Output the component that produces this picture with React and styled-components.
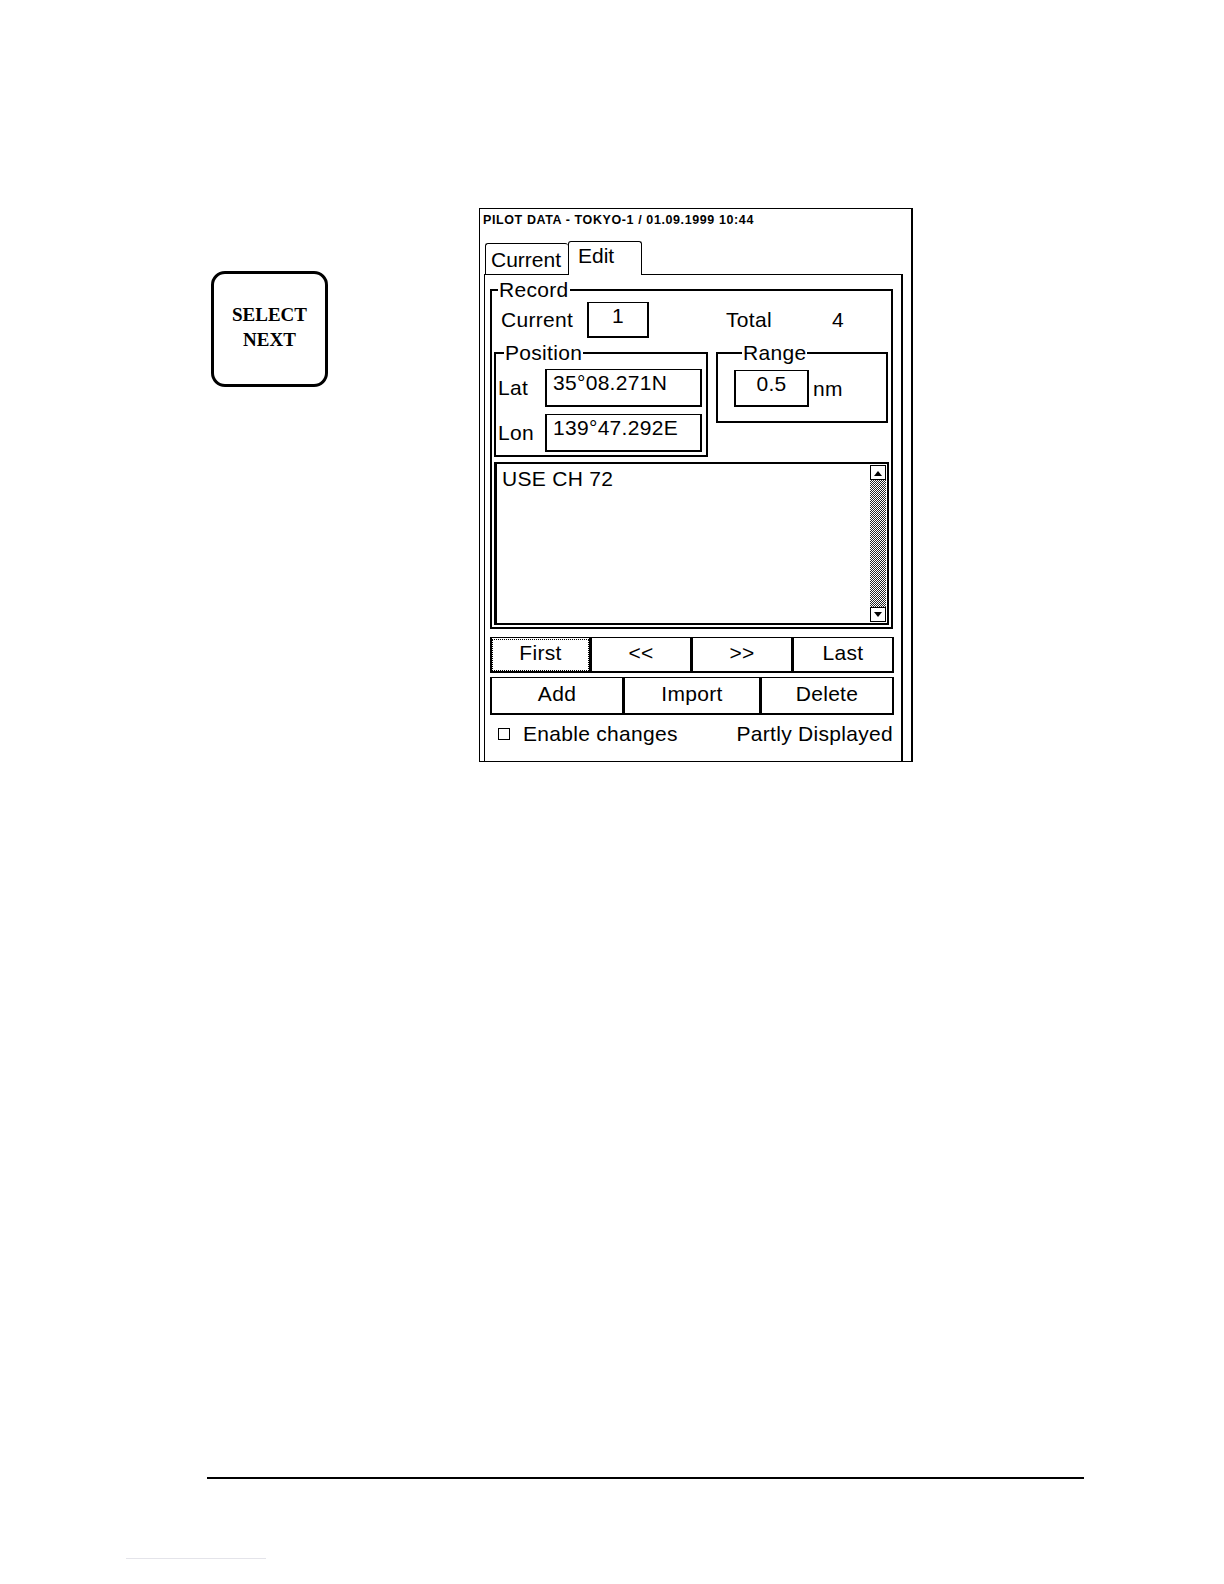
import React from 'react';
import styled, { createGlobalStyle } from 'styled-components';

const GlobalStyle = createGlobalStyle`
  html, body {
    margin: 0;
    padding: 0;
    background: #fff;
  }
  body {
    font-family: "Liberation Sans", Arial, sans-serif;
    color: #000;
  }
`;

const Page = styled.div`
  width: 1224px;
  min-height: 1584px;
  padding-top: 208px;
  box-sizing: border-box;
  display: flex;
  flex-direction: column;
`;

const Figure = styled.div`
  display: flex;
  align-items: flex-start;
  padding-left: 211px;
`;

const HardKey = styled.div`
  margin-top: 63px;
  width: 117px;
  height: 116px;
  box-sizing: border-box;
  border: 3px solid #000;
  border-radius: 14px;
  display: flex;
  flex-direction: column;
  align-items: center;
  justify-content: center;
  font-family: "Liberation Serif", "Times New Roman", serif;
  font-weight: bold;
  font-size: 19px;
  line-height: 25px;
  padding-bottom: 4px;
`;

const Dialog = styled.div`
  margin-left: 151px;
  width: 434px;
  height: 554px;
  box-sizing: border-box;
  border: 1px solid #000;
  border-right-width: 2px;
  display: flex;
  flex-direction: column;
`;

const Title = styled.div`
  font-weight: bold;
  font-size: 12.5px;
  line-height: 14px;
  letter-spacing: 0.6px;
  padding: 4px 0 0 3px;
  white-space: nowrap;
`;

const TabStrip = styled.div`
  display: flex;
  align-items: flex-end;
  margin: 14px 0 0 5px;
  height: 33px;
  position: relative;
  z-index: 1;
`;

const Tab = styled.div`
  box-sizing: border-box;
  font-size: 21px;
  line-height: 24px;
  background: #fff;
  border: 1px solid #000;
  border-bottom: none;
  border-radius: 3px 3px 0 0;
  height: ${(p) => (p.$active ? '34px' : '31px')};
  margin-bottom: ${(p) => (p.$active ? '-1px' : '0')};
  width: ${(p) => p.$width}px;
  padding: ${(p) => (p.$active ? '2px 0 0 9px' : '4px 0 0 5px')};
  border-right-width: ${(p) => (p.$active ? '1px' : '0')};
`;

const Panel = styled.div`
  flex: 1;
  margin: 0 8px 0 4px;
  border: 1px solid #000;
  border-right-width: 2px;
  border-bottom: none;
  padding: 3px 8px 0 5px;
  display: flex;
  flex-direction: column;
  font-size: 21px;
  letter-spacing: 0.3px;
`;

const GroupBox = styled.fieldset`
  margin: 0;
  padding: ${(p) => p.$pad || '0'};
  border: 2px solid #000;
  min-width: 0;
  box-sizing: border-box;
  width: ${(p) => (p.$width ? `${p.$width}px` : 'auto')};
  height: ${(p) => (p.$height ? `${p.$height}px` : 'auto')};
`;

const Legend = styled.legend`
  padding: 0 1px;
  margin-left: ${(p) => p.$indent || 6}px;
  font-size: 21px;
  line-height: 23px;
`;

const RecordRow = styled.div`
  display: flex;
  align-items: center;
  padding-left: 9px;
  height: 36px;
  margin-top: 1px;
`;

const Label = styled.span`
  display: inline-block;
  width: ${(p) => p.$width}px;
  line-height: 24px;
  white-space: nowrap;
`;

const Field = styled.div`
  box-sizing: border-box;
  width: ${(p) => p.$width}px;
  height: ${(p) => p.$height}px;
  border: 2px solid #000;
  border-top-width: 1.5px;
  padding: 1px 0 0 ${(p) => (p.$center ? 0 : 6)}px;
  text-align: ${(p) => (p.$center ? 'center' : 'left')};
  line-height: 24px;
  white-space: nowrap;
`;

const GroupsRow = styled.div`
  display: flex;
  gap: 8px;
  margin: 3px 3px 0 2px;
  align-items: flex-start;
`;

const FieldLine = styled.div`
  display: flex;
  align-items: center;
  margin-top: ${(p) => p.$gap}px;
`;

const Notes = styled.div`
  display: flex;
  margin: 5px 2px 1px;
  height: 163px;
  box-sizing: border-box;
  border: 2px solid #000;
  border-left-width: 3px;
`;

const NotesText = styled.div`
  flex: 1;
  padding: 2px 0 0 5px;
  line-height: 26px;
`;

const ScrollBar = styled.div`
  width: 16px;
  margin: 1px 1px 1px 0;
  display: flex;
  flex-direction: column;
`;

const ScrollArrow = styled.div`
  width: 16px;
  height: 15px;
  box-sizing: border-box;
  border: 1px solid #000;
  background: #fff;
  display: flex;
  align-items: center;
  justify-content: center;
`;

const ScrollTrack = styled.div`
  flex: 1;
  background: repeating-conic-gradient(#000 0 25%, #fff 0 50%) 0 0 / 2px 2px;
  opacity: 0.85;
`;

const ButtonRow = styled.div`
  display: grid;
  grid-template-columns: ${(p) => p.$cols};
  margin-top: ${(p) => p.$top}px;
  height: ${(p) => p.$height}px;
  margin-right: -1px;
`;

const Button = styled.div`
  box-sizing: border-box;
  border: 2px solid #000;
  border-top-width: 1px;
  border-bottom-width: 2.5px;
  border-left-width: ${(p) => (p.$first ? '2px' : '1px')};
  display: flex;
  align-items: center;
  justify-content: center;
  line-height: 24px;
  padding-bottom: 3px;
  outline: ${(p) => (p.$focus ? '1px dotted #000' : 'none')};
  outline-offset: -3px;
`;

const StatusRow = styled.div`
  display: flex;
  align-items: center;
  justify-content: space-between;
  margin: 6px 0 0 8px;
  height: 26px;
`;

const CheckLabel = styled.div`
  display: flex;
  align-items: center;
  gap: 13px;
`;

const CheckBox = styled.span`
  display: inline-block;
  width: 12px;
  height: 12px;
  box-sizing: border-box;
  border: 1.5px solid #000;
`;

const FooterRule = styled.div`
  margin: 715px 0 0 207px;
  width: 877px;
  height: 2px;
  background: #000;
`;

const FaintRule = styled.div`
  margin: 79px 0 0 126px;
  width: 140px;
  height: 1px;
  background: #e4e4ea;
`;

const Arrow = ({ up }) => (
  <svg width="10" height="6" viewBox="0 0 10 6">
    <path d={up ? 'M1 6 L5 1 L9 6 Z' : 'M1 0 L5 5 L9 0 Z'} fill="#000" />
  </svg>
);

const App = () => {
  return (
    <>
      <GlobalStyle />
      <Page>
        <Figure>
          <HardKey>
            <span>SELECT</span>
            <span>NEXT</span>
          </HardKey>

          <Dialog>
            <Title>PILOT DATA - TOKYO-1 / 01.09.1999 10:44</Title>
            <TabStrip>
              <Tab $width={83}>Current</Tab>
              <Tab $width={74} $active>Edit</Tab>
            </TabStrip>

            <Panel>
              <GroupBox $pad="0 0 1px 0">
                <Legend $indent={6}>Record</Legend>
                <RecordRow>
                  <Label $width={86}>Current</Label>
                  <Field $width={62} $height={36} $center>1</Field>
                  <Label $width={77} style={{ marginLeft: 77 }}>Total</Label>
                  <Label $width={20} style={{ marginLeft: 29 }}>4</Label>
                </RecordRow>

                <GroupsRow>
                  <GroupBox $width={214} $pad="0 4px 3px 2px">
                    <Legend $indent={6}>Position</Legend>
                    <FieldLine $gap={5}>
                      <Label $width={47}>Lat</Label>
                      <Field $width={157} $height={38}>35°08.271N</Field>
                    </FieldLine>
                    <FieldLine $gap={7}>
                      <Label $width={47}>Lon</Label>
                      <Field $width={157} $height={38}>139°47.292E</Field>
                    </FieldLine>
                  </GroupBox>

                  <GroupBox $width={172} $height={82} $pad="0 0 0 16px">
                    <Legend $indent={8}>Range</Legend>
                    <FieldLine $gap={6}>
                      <Field $width={75} $height={37} $center>0.5</Field>
                      <Label $width={40} style={{ marginLeft: 4 }}>nm</Label>
                    </FieldLine>
                  </GroupBox>
                </GroupsRow>

                <Notes>
                  <NotesText>USE CH 72</NotesText>
                  <ScrollBar>
                    <ScrollArrow><Arrow up /></ScrollArrow>
                    <ScrollTrack />
                    <ScrollArrow><Arrow /></ScrollArrow>
                  </ScrollBar>
                </Notes>
              </GroupBox>

              <ButtonRow $cols="1fr 1fr 1fr 1fr" $top={8} $height={36}>
                <Button $first $focus>First</Button>
                <Button>&lt;&lt;</Button>
                <Button>&gt;&gt;</Button>
                <Button>Last</Button>
              </ButtonRow>

              <ButtonRow $cols="134fr 137fr 133fr" $top={4} $height={38}>
                <Button $first>Add</Button>
                <Button>Import</Button>
                <Button>Delete</Button>
              </ButtonRow>

              <StatusRow>
                <CheckLabel>
                  <CheckBox />
                  <span>Enable changes</span>
                </CheckLabel>
                <span>Partly Displayed</span>
              </StatusRow>
            </Panel>
          </Dialog>
        </Figure>

        <FooterRule />
        <FaintRule />
      </Page>
    </>
  );
};

export default App;
